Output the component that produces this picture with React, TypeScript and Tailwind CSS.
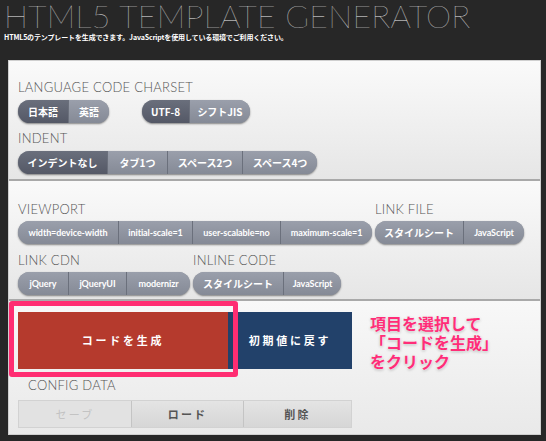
import React from "react";

const seg = "flex items-center justify-center h-full text-white font-bold border-l border-[#6b707c] first:border-l-0 whitespace-nowrap";

function Group({ items, widths, active = -1, latin = false }: { items: string[]; widths: number[]; active?: number; latin?: boolean }) {
  return (
    <div className="flex h-[23px] rounded-full overflow-hidden shadow-[0_1px_2px_rgba(0,0,0,0.45)] bg-[#8b909c]">
      {items.map((t, i) => (
        <div
          key={t}
          className={`${seg} ${/^[\x00-\x7f]+$/.test(t) && latin ? "text-[9px] font-['Lato',sans-serif] tracking-[-0.01em]" : "text-[10px]"} ${i === active ? "bg-gradient-to-b from-[#6a6f7c] to-[#545866]" : "bg-gradient-to-b from-[#9a9fab] to-[#858a96]"}`}
          style={{ width: widths[i] }}
        >
          {t}
        </div>
      ))}
    </div>
  );
}

const label = "text-[13px] leading-none text-[#555] font-light tracking-[0.02em] font-['Lato',sans-serif]";

export default function App() {
  return (
    <div className="w-[546px] h-[441px] bg-[#272727] overflow-hidden font-['Noto_Sans_CJK_JP','Noto_Sans',sans-serif]">
      <div className="pl-[4px] pt-[2px]">
        <div className="text-[32px] leading-[28px] font-thin text-[#eee] tracking-[0.3px] font-['Lato',sans-serif] whitespace-nowrap">
          HTML5 TEMPLATE GENERATOR
        </div>
        <div className="text-[7px] leading-[9px] font-bold text-white mt-[3px] tracking-[-0.02em] whitespace-nowrap">
          HTML5のテンプレートを生成できます。JavaScriptを使用している環境でご利用ください。
        </div>
      </div>
      <div className="ml-[8px] mt-[18px] w-[533px] border border-[#cfcfcf] bg-[#e8e8e8]">
        {/* section 1 */}
        <div className="h-[120px] bg-gradient-to-b from-[#fafafa] to-[#e6e6e6] border-b-2 border-[#a9a9a9] pl-[9px] pt-[20px]">
          <div className={label}>LANGUAGE CODE CHARSET</div>
          <div className="flex gap-[33px] mt-[6px]">
            <Group items={["日本語", "英語"]} widths={[50, 41]} active={0} />
            <Group items={["UTF-8", "シフトJIS"]} widths={[47, 61]} active={0} />
          </div>
          <div className={`${label} mt-[9px]`}>INDENT</div>
          <div className="flex mt-[6px]">
            <Group items={["インデントなし", "タブ1つ", "スペース2つ", "スペース4つ"]} widths={[89, 60, 75, 75]} active={0} />
          </div>
        </div>
        {/* section 2 */}
        <div className="h-[120px] bg-gradient-to-b from-[#fafafa] to-[#e6e6e6] border-b-2 border-[#a9a9a9] pl-[9px] pt-[22px]">
          <div className="flex gap-[3px]">
            <div>
              <div className={label}>VIEWPORT</div>
              <div className="mt-[5px]">
                <Group latin items={["width=device-width", "initial-scale=1", "user-scalable=no", "maximum-scale=1"]} widths={[100, 74, 88, 92]} />
              </div>
            </div>
            <div>
              <div className={label}>LINK FILE</div>
              <div className="mt-[5px]">
                <Group latin items={["スタイルシート", "JavaScript"]} widths={[88, 61]} />
              </div>
            </div>
          </div>
          <div className="flex gap-[3px] mt-[10px]">
            <div>
              <div className={label}>LINK CDN</div>
              <div className="mt-[5px]">
                <Group latin items={["jQuery", "jQueryUI", "modernizr"]} widths={[50, 58, 64]} />
              </div>
            </div>
            <div>
              <div className={label}>INLINE CODE</div>
              <div className="mt-[5px]">
                <Group latin items={["スタイルシート", "JavaScript"]} widths={[90, 58]} />
              </div>
            </div>
          </div>
        </div>
        {/* section 3 */}
        <div className="h-[133px] bg-gradient-to-b from-[#f8f8f8] to-[#e9e9e9] pl-[9px] pt-[11px]">
          <div className="flex">
            <div className="relative flex">
              <div className="w-[210px] h-[57px] bg-[#b53a2d] flex items-center justify-center text-white text-[11px] font-bold tracking-[0.25em]">
                コードを生成
              </div>
              <div className="absolute left-[-9px] top-[-11px] w-[229px] h-[76px] border-[5px] border-[#ff2d72] rounded-[3px]" />
              <div className="w-[124px] h-[57px] bg-[#22416a] flex items-center justify-center text-white text-[11px] font-bold tracking-[0.25em]">
                初期値に戻す
              </div>
            </div>
            <div className="ml-[18px] mt-[2px] text-[16px] leading-[19px] font-bold text-[#ff2d78] whitespace-nowrap [text-shadow:0_0_2px_#fff,0_1px_3px_rgba(0,0,0,0.3)]">
              項目を選択して
              <br />
              「コードを生成」
              <br />
              をクリック
            </div>
          </div>
          <div className={`${label} ml-[10px] mt-[8px] text-[12px]`}>CONFIG DATA</div>
          <div className="flex mt-[8px] h-[28px] w-[334px] border border-[#d2d2d2]">
            <div className="w-[112px] flex items-center justify-center bg-[#e2e2e2] text-[#c3c3c3] text-[11px] tracking-[0.2em]">セーブ</div>
            <div className="w-[112px] flex items-center justify-center bg-gradient-to-b from-[#e4e4e4] to-[#d6d6d6] border-l border-[#c4c4c4] text-[#555] font-bold text-[11px] tracking-[0.2em]">ロード</div>
            <div className="flex-1 flex items-center justify-center bg-gradient-to-b from-[#e4e4e4] to-[#d6d6d6] border-l border-[#c4c4c4] text-[#555] font-bold text-[11px] tracking-[0.2em]">削除</div>
          </div>
        </div>
      </div>
    </div>
  );
}
